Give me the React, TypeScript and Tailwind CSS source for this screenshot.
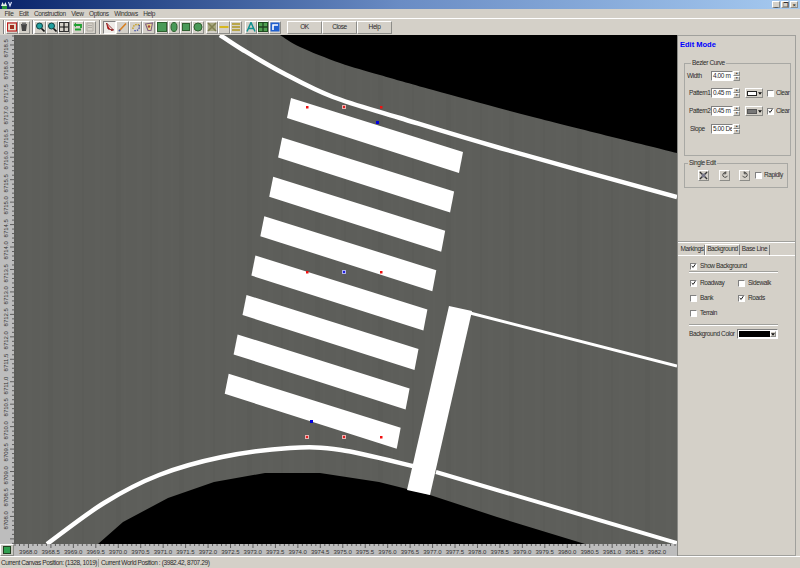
import type { ReactNode } from 'react';

const raised = 'border border-t-white border-l-white border-r-[#8c8c88] border-b-[#8c8c88]';
const sunken = 'border border-t-[#808080] border-l-[#808080] border-r-white border-b-white';

const Ic = ({ children }: { children: ReactNode }) => (
    <svg viewBox="0 0 10 10" className="w-[10px] h-[10px]">{children}</svg>
);

const Tool = ({ children, wide, pressed }: { children: ReactNode; wide?: boolean; pressed?: boolean }) => (
    <div className={`${wide ? 'w-[13px]' : 'w-[12px]'} h-[13px] flex items-center justify-center ${pressed ? sunken + ' bg-[#eeece8]' : raised}`}>
        {children}
    </div>
);

const Sep = ({ className }: { className: string }) => (
    <div className={`w-[2px] h-[14px] border-l border-l-[#808080] border-r border-r-white ${className}`} />
);

const Check = ({ on }: { on?: boolean }) => (
    <div className={`w-[7px] h-[7px] shrink-0 bg-white ${sunken} flex items-center justify-center`}>
        {on && (
            <svg viewBox="0 0 7 7" className="w-[6px] h-[6px]">
                <path d="M1 3.5 L3 5.5 L6 1" fill="none" stroke="#111" strokeWidth="1.4" />
            </svg>
        )}
    </div>
);

const Spin = ({ value }: { value: string }) => (
    <div className="flex items-stretch h-[10px] w-[29px]">
        <div className={`flex-1 bg-white ${sunken} leading-[8px] pl-[1px] overflow-hidden whitespace-nowrap`}>{value}</div>
        <div className="w-[7px] flex flex-col">
            <div className={`flex-1 ${raised} flex items-center justify-center text-[3px] leading-none`}>▲</div>
            <div className={`flex-1 ${raised} flex items-center justify-center text-[3px] leading-none`}>▼</div>
        </div>
    </div>
);

const Arrow = () => (
    <svg viewBox="0 0 5 3" className="w-[4px] h-[3px]"><path d="M0 0 H5 L2.5 3 Z" fill="#111" /></svg>
);

const PatternCombo = ({ hatch }: { hatch?: boolean }) => (
    <div className={`w-[18px] h-[10px] ${raised} flex items-center justify-center gap-[1px]`}>
        {hatch
            ? <div className="w-[10px] h-[5px] bg-[#777] border border-[#555]" />
            : <div className="w-[10px] h-[5px] bg-white border border-[#222]" />}
        <Arrow />
    </div>
);

function PatternRow({ label, value, hatch, on }: { label: string; value: string; hatch?: boolean; on?: boolean }) {
    return (
        <div className="flex items-center h-[10px] mt-[8px]">
            <span className="w-[26px] pl-[4px] whitespace-nowrap">{label}</span>
            <Spin value={value} />
            <div className="ml-[5px]"><PatternCombo hatch={hatch} /></div>
            <div className="ml-[4px]"><Check on={on} /></div>
            <span className="ml-[2px]">Clear</span>
        </div>
    );
}

const CheckItem = ({ label, on, className = '' }: { label: string; on?: boolean; className?: string }) => (
    <div className={`flex items-center gap-[3px] h-[8px] ${className}`}>
        <Check on={on} />
        <span className="whitespace-nowrap">{label}</span>
    </div>
);

// catmull-rom through the points, good enough for the road edge lines
function smooth(pts: number[][]) {
    let d = `M${pts[0][0]} ${pts[0][1]}`;
    for (let i = 0; i < pts.length - 1; i++) {
        const p0 = pts[Math.max(i - 1, 0)];
        const p1 = pts[i];
        const p2 = pts[i + 1];
        const p3 = pts[Math.min(i + 2, pts.length - 1)];
        d += ` C${p1[0] + (p2[0] - p0[0]) / 6} ${p1[1] + (p2[1] - p0[1]) / 6} ${p2[0] - (p3[0] - p1[0]) / 6} ${p2[1] - (p3[1] - p1[1]) / 6} ${p2[0]} ${p2[1]}`;
    }
    return d;
}

const bands = Array.from({ length: 60 }, (_, i) => ({ x: 14 + i * 11 + ((i * 7) % 5), w: 2 + ((i * 3) % 6), dark: i % 3 === 0 }));

function Road() {
    return (
        <svg viewBox="14 35 663 509" className="w-full h-full block">
            <rect x="14" y="35" width="663" height="509" fill="#5d5e5a" />
            {bands.map((b) => (
                <rect key={b.x} x={b.x} y="35" width={b.w} height="509" fill={b.dark ? '#000' : '#fff'} opacity="0.01" />
            ))}
            <path d={`${smooth([[280, 35], [300, 47], [340, 63], [380, 75], [433, 90], [533, 117], [677, 153]])} L677 35 Z`} fill="#000" />
            <polygon points="98,544 123,522 168,498 214,482 265,473 320,473 379,482 407,489 430,495 497,517 585,544" fill="#000" />

            <path d={smooth([[220, 35], [243, 50], [283, 73], [333, 97], [400, 118], [500, 148], [677, 197]])} fill="none" stroke="#fff" strokeWidth="4.5" />
            <path d={smooth([[47, 544], [104, 503], [159, 475], [222, 457], [290, 448], [341, 450], [413, 466]])} fill="none" stroke="#fff" strokeWidth="4.5" />
            <polyline points="436,472 677,543" fill="none" stroke="#fff" strokeWidth="4" />
            <polyline points="470,313 677,366" fill="none" stroke="#fff" strokeWidth="3" />
            <polygon points="449,306 472,311 430,495 407,490" fill="#fff" />

            {[0, 1, 2, 3, 4, 5, 6, 7].map((i) => {
                const dx = -8.9 * i;
                const dy = 39.4 * i;
                const p = [[291, 98], [463, 152], [459, 173], [287, 118]]
                    .map(([x, y]) => `${x + dx},${y + dy}`)
                    .join(' ');
                return <polygon key={i} points={p} fill="#fff" />;
            })}

            {[[307, 107], [381, 107], [307, 272], [381, 272], [381, 437]].map(([x, y]) => (
                <rect key={`${x}-${y}`} x={x - 1} y={y - 1} width="2.5" height="2.5" fill="#f01010" />
            ))}
            {[[344, 107], [307, 437], [344, 437]].map(([x, y]) => (
                <g key={`${x}-${y}`}>
                    <rect x={x - 2} y={y - 2} width="4" height="4" fill="#e8b0b0" />
                    <rect x={x - 1} y={y - 1} width="2" height="2" fill="#e02020" />
                </g>
            ))}
            <rect x="342" y="270" width="4" height="4" fill="#b0b0f0" />
            <rect x="343" y="271" width="2" height="2" fill="#2020e0" />
            <rect x="376" y="121" width="3" height="3" fill="#0000e0" />
            <rect x="310" y="420" width="3" height="3" fill="#0000e0" />
        </svg>
    );
}

const hLabels = Array.from({ length: 29 }, (_, i) => (3968 + i * 0.5).toFixed(1));
const vLabels = Array.from({ length: 22 }, (_, i) => (8718.5 - i * 0.5).toFixed(1));

function HRuler() {
    return (
        <div className="flex-1 min-w-0 bg-[#bdbdbd] overflow-hidden flex flex-col">
            <svg viewBox="0 0 663 4" className="w-[663px] h-[4px] block shrink-0">
                {Array.from({ length: 148 }, (_, i) => (
                    <line key={i} x1={i * 4.49 + 1} x2={i * 4.49 + 1} y1="0" y2={i % 5 === 3 ? 4 : 2} stroke="#333" strokeWidth="0.7" />
                ))}
            </svg>
            <div className="flex pl-[3px] text-[6px] leading-[8px] tracking-normal text-[#333]">
                {hLabels.map((l) => <span key={l} className="w-[22.46px] shrink-0 text-center">{l}</span>)}
            </div>
        </div>
    );
}

function VRuler() {
    return (
        <div className="w-[14px] shrink-0 bg-[#bdbdbd] overflow-hidden flex justify-end">
            <div className="flex flex-col text-[6px] leading-[8px] tracking-normal text-[#333] pt-[2px]">
                {vLabels.map((l) => (
                    <span key={l} className="h-[22.46px] w-[8px] shrink-0 [writing-mode:vertical-rl] rotate-180 text-center">{l}</span>
                ))}
            </div>
            <svg viewBox="0 0 4 509" className="w-[4px] h-[509px] block shrink-0">
                {Array.from({ length: 114 }, (_, i) => (
                    <line key={i} y1={i * 4.49 + 1} y2={i * 4.49 + 1} x1={i % 5 === 2 ? 0 : 2} x2="4" stroke="#333" strokeWidth="0.7" />
                ))}
            </svg>
        </div>
    );
}

export default function App() {
    return (
        <div className="w-[800px] h-[568px] overflow-hidden flex flex-col bg-[#d4d0c8] text-[#2a2a2a] text-[6.5px] tracking-[-0.4px] leading-[8px] font-['Liberation_Sans',Arial,sans-serif]">
            {/* Title bar */}
            <div className="h-[9px] shrink-0 flex items-center justify-between pl-[1px] pr-[2px] bg-gradient-to-r from-[#0a246a] via-[#6a8cc4] to-[#a6caf0]">
                <svg viewBox="0 0 12 8" className="w-[12px] h-[8px]">
                    <path d="M0 5 L1.5 1 L3 4 L4.5 1 L6 5 Z" fill="#e8f4e8" />
                    <rect x="1" y="5" width="5" height="3" fill="#2a9a3a" />
                    <path d="M7.5 1 L9 5 L10.5 1" fill="none" stroke="#dfe8ff" strokeWidth="1.1" />
                </svg>
                <div className="flex gap-[1px]">
                    {['_', '❐', '×'].map((g) => (
                        <div key={g} className={`w-[8px] h-[7px] bg-[#d4d0c8] ${raised} flex items-center justify-center text-[6px] leading-none text-black`}>{g}</div>
                    ))}
                </div>
            </div>

            {/* Menu */}
            <div className="h-[9px] shrink-0 flex items-center pl-[4px] gap-[4.5px] text-[#333]">
                {['File', 'Edit', 'Construction', 'View', 'Options', 'Windows', 'Help'].map((m) => (
                    <span key={m} className="px-[0.5px]">{m}</span>
                ))}
            </div>

            {/* Toolbar */}
            <div className="h-[17px] shrink-0 flex items-center border-t border-t-white pl-[3px]">
                <Sep className="mr-[1px]" />
                <Tool><Ic><rect x="0.5" y="1" width="9" height="8" fill="#e8e0d0" stroke="#c02020" strokeWidth="1.2" /><rect x="3" y="3" width="4" height="4" fill="#a03020" /></Ic></Tool>
                <Tool><Ic><path d="M2 2 H8 L7 9 H3 Z" fill="#444" /><rect x="3" y="0.5" width="4" height="2" fill="#777" /></Ic></Tool>
                <Sep className="ml-[2px] mr-[0px]" />
                <Tool><Ic><circle cx="4.5" cy="4" r="3" fill="#20a0a0" stroke="#104040" /><path d="M6.5 6.5 L9.5 9.5" stroke="#111" strokeWidth="1.6" /></Ic></Tool>
                <Tool><Ic><circle cx="4.5" cy="4" r="3" fill="#20a0a0" stroke="#104040" /><path d="M6.5 6.5 L9.5 9.5" stroke="#111" strokeWidth="1.6" /></Ic></Tool>
                <Tool><Ic><rect x="0.5" y="0.5" width="9" height="9" fill="none" stroke="#333" /><path d="M5 1 V9 M1 5 H9" stroke="#111" strokeWidth="1.2" /></Ic></Tool>
                <div className="w-[2px]" />
                <Tool><Ic><path d="M2 3 H8 V6 M8 7.5 H2" fill="none" stroke="#20a030" strokeWidth="1.8" /><path d="M0.5 3 L3 0.5 V5.5 Z" fill="#20a030" /></Ic></Tool>
                <Tool><Ic><path d="M2 1 H8 V9 H2 Z M3 3.5 H7 M3 5.5 H7" fill="none" stroke="#b0aca4" /></Ic></Tool>
                <Sep className="ml-[3px] mr-[2px]" />
                <Tool wide pressed><Ic><path d="M1.5 1 L8.5 8 L6 8.5 M1.5 1 L3 7 L8.5 8" fill="#d01818" stroke="#801010" strokeWidth="0.8" /></Ic></Tool>
                <Tool wide><Ic><path d="M1.5 8.5 L8 1.5" stroke="#d88020" strokeWidth="1.6" /><circle cx="1.5" cy="8.5" r="1" fill="#4050a0" /></Ic></Tool>
                <Tool wide><Ic><path d="M2 7 A4 4 0 0 1 8 3" fill="none" stroke="#c8a020" strokeWidth="1.4" strokeDasharray="1.5 1" /><path d="M8 3 A4 4 0 0 1 3 8.5" fill="none" stroke="#3040a0" strokeWidth="1.2" strokeDasharray="1.5 1" /></Ic></Tool>
                <Tool wide><Ic><path d="M1.5 2 L8.5 1 L7 8.5 L4 8.5 Z" fill="#e8d890" stroke="#806080" strokeWidth="1.1" /><circle cx="5" cy="4.5" r="1.2" fill="#a04040" /></Ic></Tool>
                <div className="w-[1px]" />
                <Tool><Ic><rect x="0.5" y="0.5" width="9" height="9" fill="#4a9a58" stroke="#306030" /></Ic></Tool>
                <Tool><Ic><ellipse cx="5" cy="5" rx="3" ry="4.5" fill="#4a9a58" stroke="#306030" /></Ic></Tool>
                <Tool><Ic><rect x="1.5" y="1.5" width="7" height="7" fill="#4a9a58" stroke="#306030" /></Ic></Tool>
                <Tool><Ic><circle cx="5" cy="5" r="4" fill="#4a9a58" stroke="#306030" /></Ic></Tool>
                <div className="w-[2px]" />
                <Tool><Ic><rect x="1" y="1" width="8" height="8" fill="#a8a880" /><path d="M1 1 L9 9 M9 1 L1 9" stroke="#808050" strokeWidth="1.6" /></Ic></Tool>
                <Tool><Ic><path d="M0.5 5 H9.5" stroke="#d8b820" strokeWidth="2" /></Ic></Tool>
                <Tool><Ic><path d="M1 2 H9 M1 5 H9 M1 8 H9" stroke="#b09820" strokeWidth="1.3" /></Ic></Tool>
                <div className="w-[3px]" />
                <Tool><Ic><path d="M1 9.5 L5 0.5 L9 9.5 M2.8 6.5 H7.2" fill="none" stroke="#109090" strokeWidth="1.5" /></Ic></Tool>
                <Tool><Ic><rect x="0.5" y="0.5" width="9" height="9" fill="#50a050" stroke="#205020" /><path d="M5 0 V10 M0 5 H10" stroke="#204020" strokeWidth="1.3" /></Ic></Tool>
                <Tool><Ic><rect x="0.5" y="0.5" width="9" height="9" fill="#2060d0" /><path d="M3 8 V3 H8" fill="none" stroke="#fff" strokeWidth="1.6" /></Ic></Tool>
                <div className="w-[6px]" />
                {['OK', 'Close', 'Help'].map((b) => (
                    <div key={b} className={`w-[35px] h-[13px] ${raised} flex items-center justify-center`}>{b}</div>
                ))}
            </div>

            <div className="flex-1 min-h-0 flex">
                {/* Canvas with rulers */}
                <div className="w-[677px] shrink-0 flex flex-col">
                    <div className="h-[509px] flex">
                        <VRuler />
                        <div className="flex-1 min-w-0"><Road /></div>
                    </div>
                    <div className="h-[12px] flex">
                        <div className={`w-[14px] shrink-0 bg-[#c8c8c0] ${raised} flex items-center justify-center`}>
                            <div className="w-[8px] h-[8px] bg-[#30a050] border border-[#204020]" />
                        </div>
                        <HRuler />
                    </div>
                </div>

                {/* Right side panel */}
                <div className="w-[119px] shrink-0 flex flex-col border-l border-l-[#8a8a86] border-r border-r-[#a0a09c]">
                    <div className="h-[207px] shrink-0 border-b border-b-[#a0a09c] border-t border-t-[#a0a09c] pl-[6px] pr-[7px]">
                        <div className="text-[7.5px] tracking-normal leading-[9px] font-bold text-[#0000ff] -ml-[4px] mt-[4px] mb-[10px]">Edit Mode</div>
                        <fieldset className="h-[97px] border border-[#a8a8a4] px-0 pb-0 pt-[4px]">
                            <legend className="ml-[6px] px-[1px]">Bezier Curve</legend>
                            <div className="flex items-center h-[10px] -mb-[1px]">
                                <span className="w-[26px] pl-[2px]">Width</span>
                                <Spin value="4.00 m" />
                            </div>
                            <PatternRow label="Pattern1" value="0.45 m" />
                            <PatternRow label="Pattern2" value="0.45 m" hatch on />
                            <div className="flex items-center h-[10px] mt-[8px]">
                                <span className="w-[26px] pl-[5px]">Slope</span>
                                <Spin value="5.00 De" />
                            </div>
                        </fieldset>
                        <fieldset className="h-[29px] mt-[3px] border border-[#a8a8a4] px-0 pb-0 pt-[1px]">
                            <legend className="ml-[3px] px-[1px]">Single Edit</legend>
                            <div className="flex items-center pl-[13px] h-[14px]">
                                <div className={`w-[11px] h-[11px] ${raised} flex items-center justify-center`}>
                                    <svg viewBox="0 0 10 10" className="w-[9px] h-[9px]"><path d="M1 1 L9 9 M9 1 L1 9" stroke="#333" strokeWidth="1.5" /><rect x="3" y="3" width="4" height="4" fill="#778" /></svg>
                                </div>
                                <div className={`ml-[10px] w-[11px] h-[11px] ${raised} flex items-center justify-center`}>
                                    <svg viewBox="0 0 10 10" className="w-[8px] h-[8px]"><path d="M8 6 A3 3 0 1 1 6 2 M6 0.5 V3.5 H3.5" fill="none" stroke="#333" strokeWidth="1" /></svg>
                                </div>
                                <div className={`ml-[9px] w-[11px] h-[11px] ${raised} flex items-center justify-center`}>
                                    <svg viewBox="0 0 10 10" className="w-[8px] h-[8px]"><path d="M2 6 A3 3 0 1 0 4 2 M4 0.5 V3.5 H6.5" fill="none" stroke="#333" strokeWidth="1" /></svg>
                                </div>
                                <div className="ml-[5px] flex items-center gap-[2px]"><Check /><span>Rapidly</span></div>
                            </div>
                        </fieldset>
                    </div>

                    <div className="h-[314px] shrink-0 border-b border-b-[#a0a09c] border-t border-t-white pt-[2px]">
                        <div className="h-[11px] flex items-end pl-[2px] border-b border-b-white">
                            <div className="w-[25px] h-[10px] text-center border-r border-r-[#808080]">Markings</div>
                            <div className="w-[35px] h-[11px] text-center border-t border-t-white border-l border-l-white border-r border-r-[#808080]">Background</div>
                            <div className="w-[30px] h-[10px] text-center border-r border-r-[#808080]">Base Line</div>
                        </div>
                        <div className="pl-[12px] pr-[17px] pt-[6px]">
                            <CheckItem label="Show Background" on />
                            <div className="h-[2px] mt-[1px] -ml-[1px] border-t border-t-[#a0a09c] border-b border-b-white" />
                            <div className="grid grid-cols-[48px_1fr] gap-y-[7px] mt-[6px]">
                                <CheckItem label="Roadway" on />
                                <CheckItem label="Sidewalk" />
                                <CheckItem label="Bank" />
                                <CheckItem label="Roads" on />
                                <CheckItem label="Terrain" />
                            </div>
                            <div className="h-[2px] mt-[7px] -ml-[1px] border-t border-t-[#a0a09c] border-b border-b-white" />
                            <div className="flex items-center mt-[3px] h-[10px]">
                                <span className="w-[49px] -ml-[1px] whitespace-nowrap">Background Color</span>
                                <div className={`w-[41px] h-[10px] ${sunken} bg-white flex items-center p-[1px]`}>
                                    <div className="flex-1 h-full bg-black" />
                                    <div className={`w-[6px] h-full ${raised} bg-[#d4d0c8] flex items-center justify-center`}><Arrow /></div>
                                </div>
                            </div>
                        </div>
                    </div>
                </div>
            </div>

            {/* Status bar */}
            <div className="h-[12px] shrink-0 flex items-center border-t border-t-white">
                <span className="w-[99px] pl-[1px] whitespace-nowrap border-r border-r-[#a0a09c]">Current Canvas Position: (1328, 1019)</span>
                <span className="pl-[2px] whitespace-nowrap">Current World Position : (3982.42, 8707.29)</span>
            </div>
        </div>
    );
}
